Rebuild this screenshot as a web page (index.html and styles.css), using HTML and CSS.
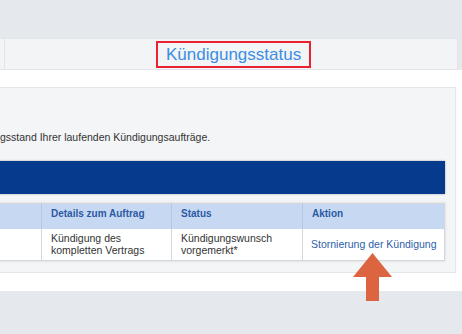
FILE: index.html
```html
<!DOCTYPE html>
<html lang="de">
<head>
<meta charset="utf-8">
<title>Kündigungsstatus</title>
<link rel="stylesheet" href="styles.css">
</head>
<body>
<div class="top"></div>
<div class="tabbar">
  <div class="tab-prev"></div>
  <div class="tab">Kündigungsstatus</div>
</div>
<div class="content">
  <div class="panel">
    <p class="intro">gsstand Ihrer laufenden Kündigungsaufträge.</p>
    <div class="bar"></div>
    <table class="orders">
      <colgroup>
        <col class="c1"><col class="c2"><col class="c3"><col class="c4">
      </colgroup>
      <thead>
        <tr><th></th><th>Details zum Auftrag</th><th>Status</th><th>Aktion</th></tr>
      </thead>
      <tbody>
        <tr>
          <td></td>
          <td>Kündigung des<br>kompletten Vertrags</td>
          <td>Kündigungswunsch<br>vorgemerkt*</td>
          <td><a class="link" href="#">Stornierung der Kündigung</a></td>
        </tr>
      </tbody>
    </table>
  </div>
  <svg class="arrow" width="40" height="48" viewBox="0 0 40 48">
    <polygon points="19.5,0 39,24 26,24 26,48 13,48 13,24 0,24" fill="#dc6440"/>
  </svg>
</div>
</body>
</html>
```
FILE: styles.css
```css
html, body {
  margin: 0;
  padding: 0;
}
body {
  background: #e5e8ed;
  font-family: "Liberation Sans", Arial, sans-serif;
  width: 462px;
  height: 334px;
  overflow: hidden;
}
.top {
  height: 38px;
}
.tabbar {
  height: 30px;
  margin-left: -10px;
  width: 466px;
  background: #f3f4f6;
  border: 1px solid #e2e4e7;
  display: flex;
  align-items: center;
}
.tab-prev {
  width: 13px;
  align-self: stretch;
  border-right: 1px solid #e2e4e7;
}
.tab {
  margin-left: 151px;
  height: 23px;
  padding: 0 8px;
  border: 2px solid #e8232f;
  color: #3b8ee3;
  font-size: 17px;
  line-height: 23px;
  white-space: nowrap;
}
.content {
  position: relative;
  background: #ffffff;
  padding: 17px 0 18px 0;
}
.panel {
  margin-left: -30px;
  width: 486px;
  box-sizing: border-box;
  background: #f4f5f7;
  border: 1px solid #e4e6e9;
  padding: 43px 10px 11px 10px;
}
.intro {
  margin: 0;
  padding-left: 19px;
  font-size: 10.5px;
  line-height: 12px;
  color: #333333;
}
.bar {
  margin-top: 18px;
  height: 33px;
  background: #063a8d;
  box-shadow: 0 0 2px rgba(0, 0, 0, 0.35);
}
.orders {
  margin-top: 9px;
  width: 463px;
  table-layout: fixed;
  border-collapse: collapse;
  border: 1px solid #d3d6da;
  box-shadow: 0 0 3px rgba(0, 0, 0, 0.12);
  font-size: 10.5px;
}
.c1 { width: 60px; }
.c2 { width: 130px; }
.c3 { width: 131px; }
.c4 { width: 142px; }
.orders th {
  height: 25px;
  background: #c7d9f2;
  color: #2c5aa3;
  font-size: 10px;
  font-weight: bold;
  text-align: left;
  vertical-align: top;
  padding: 4px 0 0 9px;
  box-sizing: border-box;
  border-left: 1px solid #b9c7da;
  line-height: 12px;
}
.orders th:first-child { border-left: none; }
.orders td {
  height: 32px;
  background: #ffffff;
  color: #333333;
  padding: 0 0 0 9px;
  box-sizing: border-box;
  line-height: 12px;
  vertical-align: middle;
  border-left: 1px solid #d3d6da;
}
.orders td:first-child { border-left: none; }
.orders td:last-child { padding-left: 8px; }
.link {
  color: #2d5ea8;
  text-decoration: none;
}
.arrow {
  position: absolute;
  left: 353px;
  top: 183px;
}
```
